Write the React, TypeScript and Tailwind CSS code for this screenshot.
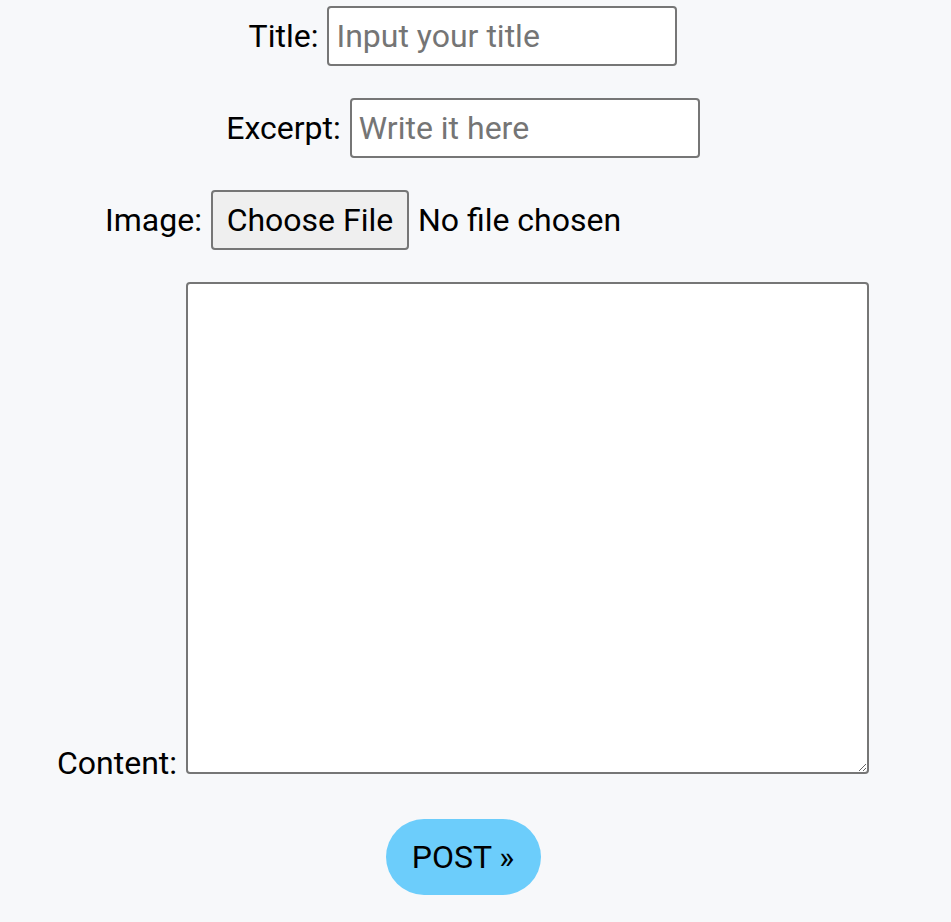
import React from 'react';

export default function App() {
  const font = { fontFamily: 'Roboto, "Liberation Sans", sans-serif' };

  return (
    <div className="min-h-screen bg-[#f7f8fa] text-black" style={font}>
      <form className="w-[926px] pt-[6px] text-center text-[32px]">
        <div className="flex items-center justify-center gap-[9px]">
          <label htmlFor="title">Title:</label>
          <input
            id="title"
            type="text"
            placeholder="Input your title"
            className="h-[60px] w-[350px] rounded-[4px] border-2 border-[#767676] bg-white px-[7px] text-[32px] placeholder:text-[#757575]"
          />
        </div>

        <div className="mt-[32px] flex items-center justify-center gap-[9px]">
          <label htmlFor="excerpt">Excerpt:</label>
          <input
            id="excerpt"
            type="text"
            placeholder="Write it here"
            className="h-[60px] w-[350px] rounded-[4px] border-2 border-[#767676] bg-white px-[7px] text-[32px] placeholder:text-[#757575]"
          />
        </div>

        <div className="mt-[32px] flex items-center justify-center gap-[9px]">
          <span>Image:</span>
          <span className="flex w-[610px] items-center gap-[9px]">
            <span className="flex h-[60px] w-[198px] items-center justify-center rounded-[4px] border-2 border-[#767676] bg-[#efefef]">
              Choose File
            </span>
            <span>No file chosen</span>
          </span>
        </div>

        <div className="mt-[32px]">
          <label htmlFor="content" className="mr-[9px]">Content:</label>
          <textarea
            id="content"
            className="inline-block h-[492px] w-[683px] rounded-[4px] border-2 border-[#767676] bg-white align-baseline"
          />
        </div>

        <div className="mt-[32px] flex justify-center">
          <button
            type="button"
            className="h-[76px] w-[155px] rounded-full bg-[#6ccdfb] text-[32px]"
          >
            POST »
          </button>
        </div>
      </form>
    </div>
  );
}
